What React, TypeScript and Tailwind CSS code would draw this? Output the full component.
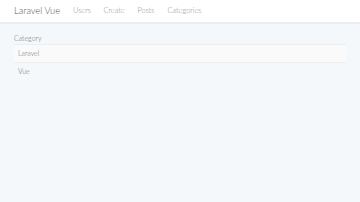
import React from 'react';

const links = [
    { label: 'Users', w: 'w-[30.5px]' },
    { label: 'Create', w: 'w-[34px]' },
    { label: 'Posts', w: 'w-[30px]' },
    { label: 'Categories', w: '' },
];
const categories = ['Laravel', 'Vue'];

const App: React.FC = () => {
    return (
        <div className="min-h-[202px] bg-[#f5f8fa] text-[#636b6f]" style={{ fontFamily: 'Lato, "Open Sans", sans-serif' }}>
            <nav className="h-[23px] bg-white border-b border-[#e8edf1] shadow-[0_1px_1px_rgba(0,0,0,0.04)] flex items-center pl-[14px]">
                <span className="w-[59px] text-[9.3px] text-[#555] font-light">Laravel Vue</span>
                <div className="flex text-[7.4px] text-[#8a8f93] font-light">
                    {links.map((l) => (
                        <span key={l.label} className={l.w}>{l.label}</span>
                    ))}
                </div>
            </nav>

            <main className="px-[14px] pt-[11px]">
                <div className="text-[7px] text-[#707070] font-light leading-[9px]">Category</div>
                <div className="w-[332px] mt-[1px]">
                    {categories.map((c, i) => (
                        <div
                            key={c}
                            className={`h-[18px] flex items-center pl-[4px] text-[7px] font-light text-[#707070] border-t border-[#eceff2] ${i % 2 === 0 ? 'bg-[#fafafa]' : ''}`}
                        >
                            {c}
                        </div>
                    ))}
                </div>
            </main>
        </div>
    );
};

export default App;
